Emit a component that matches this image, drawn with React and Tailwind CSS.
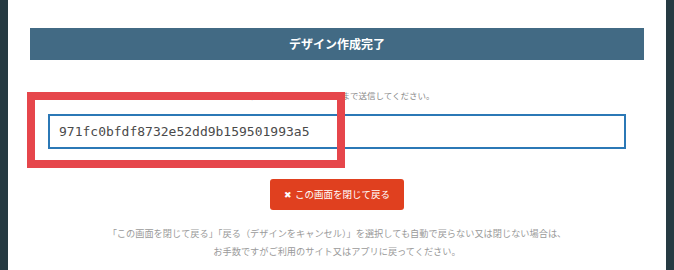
import React from 'react';

const jp = { fontFamily: '"Noto Sans CJK JP", "Noto Sans", sans-serif' };

const App = () => {
  return (
    <div className="h-[270px] w-[674px] bg-[#263a42] flex overflow-hidden" style={jp}>
      <div className="relative ml-[8px] w-[658px] h-full bg-white px-[22px] pt-[28px]">
        {/* Title bar */}
        <div className="h-[32px] bg-[#426a84] flex items-center justify-center">
          <h1 className="text-white text-[12px] font-bold leading-none">デザイン作成完了</h1>
        </div>

        <div className="px-[18px]">
          <p className="mt-[29px] text-center text-[8.5px] leading-[12px] text-[#8a8a8a]">
            以下のデザインIDをアプリまで送信してください。
          </p>

          <div className="mt-[13px] h-[35px] border-2 border-[#2b78b6] flex items-center px-[9px]">
            <span className="text-[13px] text-[#4a4a4a]" style={{ fontFamily: '"DejaVu Sans Mono", monospace' }}>
              971fc0bfdf8732e52dd9b159501993a5
            </span>
          </div>

          <div className="flex justify-center mt-[30px]">
            <button className="h-[31px] w-[134px] rounded-[3px] bg-[#e0401f] text-white text-[9.5px] flex items-center justify-center gap-[3px]">
              <span className="text-[9px]">✖</span>
              <span>この画面を閉じて戻る</span>
            </button>
          </div>

          <div className="mt-[14px] text-center text-[9.2px] leading-[18px] text-[#9a9a9a]">
            <p>「この画面を閉じて戻る」「戻る（デザインをキャンセル）」を選択しても自動で戻らない又は閉じない場合は、</p>
            <p>お手数ですがご利用のサイト又はアプリに戻ってください。</p>
          </div>
        </div>

        {/* annotation box */}
        <div className="absolute left-[19px] top-[92px] w-[318px] h-[76px] border-[8px] border-[#e6464b]" />
      </div>
    </div>
  );
};

export default App;
